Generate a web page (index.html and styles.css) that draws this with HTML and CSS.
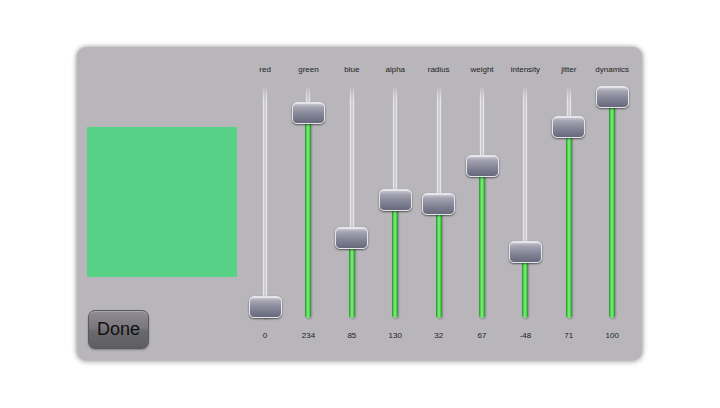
FILE: index.html
```html
<!DOCTYPE html>
<html>
<head>
<meta charset="utf-8">
<link rel="stylesheet" href="styles.css">
</head>
<body>
<div class="stage">
  <div class="panel">
    <div class="left">
      <div class="swatch"></div>
      <button class="done">Done</button>
    </div>
    <div class="sliders">
      <div class="col"><div class="label">red</div><div class="track"><div class="rail"></div><div class="fill" style="top:219px"></div><div class="thumb" style="top:208px"></div></div><div class="value">0</div></div>
      <div class="col"><div class="label">green</div><div class="track"><div class="rail"></div><div class="fill" style="top:25px"></div><div class="thumb" style="top:14px"></div></div><div class="value">234</div></div>
      <div class="col"><div class="label">blue</div><div class="track"><div class="rail"></div><div class="fill" style="top:150px"></div><div class="thumb" style="top:139px"></div></div><div class="value">85</div></div>
      <div class="col"><div class="label">alpha</div><div class="track"><div class="rail"></div><div class="fill" style="top:112px"></div><div class="thumb" style="top:101px"></div></div><div class="value">130</div></div>
      <div class="col"><div class="label">radius</div><div class="track"><div class="rail"></div><div class="fill" style="top:116px"></div><div class="thumb" style="top:105px"></div></div><div class="value">32</div></div>
      <div class="col"><div class="label">weight</div><div class="track"><div class="rail"></div><div class="fill" style="top:78px"></div><div class="thumb" style="top:67px"></div></div><div class="value">67</div></div>
      <div class="col"><div class="label">intensity</div><div class="track"><div class="rail"></div><div class="fill" style="top:164px"></div><div class="thumb" style="top:153px"></div></div><div class="value">-48</div></div>
      <div class="col"><div class="label">jitter</div><div class="track"><div class="rail"></div><div class="fill" style="top:39px"></div><div class="thumb" style="top:28px"></div></div><div class="value">71</div></div>
      <div class="col"><div class="label">dynamics</div><div class="track"><div class="rail"></div><div class="fill" style="top:9px"></div><div class="thumb" style="top:-2px"></div></div><div class="value">100</div></div>
    </div>
  </div>
</div>
</body>
</html>
```

FILE: styles.css
```css
html, body {
  margin: 0;
  padding: 0;
  background: #ffffff;
}
body {
  width: 720px;
  height: 408px;
  font-family: "Liberation Sans", Arial, sans-serif;
}
.stage {
  width: 720px;
  height: 408px;
  box-sizing: border-box;
  padding: 47px 0 0 77px;
}
.panel {
  width: 565px;
  height: 313px;
  box-sizing: border-box;
  padding: 17px 8px 10px 10px;
  background: #b8b6ba;
  border-radius: 9px;
  box-shadow: 0 0 5px rgba(0, 0, 0, 0.35), 0 2px 6px rgba(0, 0, 0, 0.2);
  display: flex;
  gap: 6.4px;
}
.left {
  width: 150px;
  display: flex;
  flex-direction: column;
  align-items: flex-start;
}
.swatch {
  width: 150px;
  height: 150px;
  margin-top: 63px;
  background: #56d185;
}
.done {
  margin-top: 33px;
  margin-left: 1px;
  width: 61px;
  height: 39px;
  padding: 0;
  border: 1px solid #5a595e;
  border-radius: 7px;
  background: linear-gradient(to bottom, #8e8c92 0%, #7a787e 45%, #6a696e 55%, #5e5d62 100%);
  box-shadow: inset 0 1px 0 rgba(255, 255, 255, 0.25), 0 1px 2px rgba(0, 0, 0, 0.3);
  font-family: "Liberation Sans", Arial, sans-serif;
  font-size: 18px;
  color: #111111;
  line-height: 37px;
  text-align: center;
}
.sliders {
  display: grid;
  grid-template-columns: repeat(9, 43.4px);
  width: 390.6px;
}
.col {
  display: flex;
  flex-direction: column;
  align-items: center;
}
.label, .value {
  font-size: 8px;
  line-height: 12px;
  height: 12px;
  color: #222222;
  white-space: nowrap;
}
.track {
  position: relative;
  margin-top: 12px;
  width: 33px;
  height: 230px;
}
.rail {
  width: 6px;
  height: 100%;
  margin: 0 auto;
  border-radius: 3px;
  background: linear-gradient(to right, #a9a7ac 0%, #e6e5e9 25%, #c2c0c5 50%, #e6e5e9 75%, #a9a7ac 100%);
  -webkit-mask-image: linear-gradient(to bottom, rgba(0,0,0,0.3) 0px, #000 12px);
  mask-image: linear-gradient(to bottom, rgba(0,0,0,0.3) 0px, #000 12px);
}
.fill {
  position: absolute;
  left: 13.5px;
  width: 6px;
  bottom: 0;
  border-radius: 3px;
  background: linear-gradient(to right, #2f8a32 0%, #52d352 28%, #86f286 50%, #52d352 72%, #2f8a32 100%);
  box-shadow: 1px 1px 2px rgba(0, 0, 0, 0.25);
}
.thumb {
  position: absolute;
  left: 0;
  width: 33px;
  height: 22px;
  box-sizing: border-box;
  border: 1px solid #e4e4ea;
  border-radius: 5px;
  background: linear-gradient(to bottom, #d0d0d8 0%, #a4a4b2 20%, #8a8a9c 50%, #68687c 100%);
  box-shadow: 0 1px 2px rgba(0, 0, 0, 0.55), inset 0 1px 0 rgba(255, 255, 255, 0.5);
}
.value {
  margin-top: 12px;
}
```
